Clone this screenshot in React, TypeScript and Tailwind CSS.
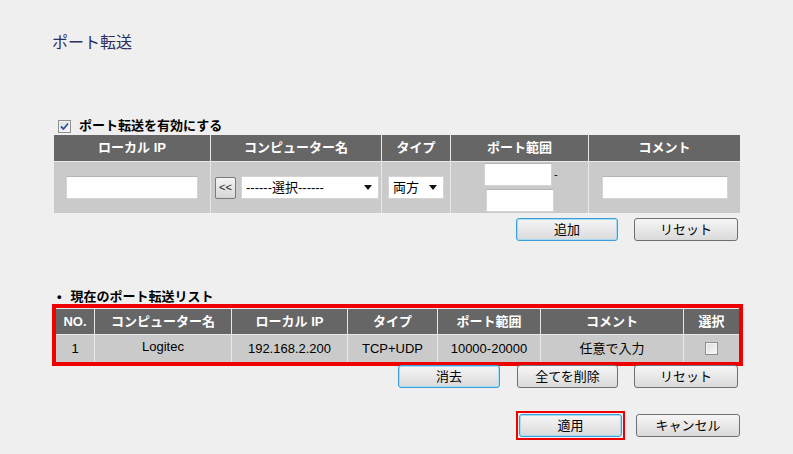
import React from "react";

const font = { fontFamily: '"Liberation Sans", "Noto Sans CJK JP", sans-serif' };

function Btn({ label, w, focus }: { label: string; w: string; focus?: boolean }) {
  return (
    <div
      className={`${w} h-[23px] flex items-center justify-center rounded-[3px] border text-[13px] text-black bg-gradient-to-b from-[#f6f6f6] to-[#dadada] ${
        focus ? "border-[#3c9ed8] shadow-[inset_0_0_0_1px_#a8dcf5]" : "border-[#707070]"
      }`}
    >
      {label}
    </div>
  );
}

function TextInput({ w }: { w: string }) {
  return <div className={`${w} h-[23px] bg-white border border-[#d4d4d4] border-t-[#b4b4b4]`} />;
}

function Arrow() {
  return (
    <svg width="8" height="5" viewBox="0 0 8 5" className="shrink-0">
      <path d="M0 0h8L4 5z" fill="#111" />
    </svg>
  );
}

function Select({ w, label }: { w: string; label: string }) {
  return (
    <div className={`${w} h-[23px] bg-white border border-[#d4d4d4] flex items-center pl-[4px] pr-[6px] text-[13px] text-black`}>
      <span className="flex-1">{label}</span>
      <Arrow />
    </div>
  );
}

function Check({ checked }: { checked?: boolean }) {
  return (
    <div className="w-[13px] h-[13px] border border-[#8e8f8f] bg-gradient-to-br from-[#dcdcdc] to-[#fbfbfb] flex items-center justify-center shadow-[inset_0_0_0_1px_#f4f4f4]">
      {checked && (
        <svg width="9" height="9" viewBox="0 0 9 9">
          <path d="M1 4.5 L3.5 7 L8 1.5" stroke="#2b4fa5" strokeWidth="1.8" fill="none" />
        </svg>
      )}
    </div>
  );
}

export default function App() {
  const h1 = "bg-[#666666] text-white font-bold text-[13px] flex items-center justify-center";
  const d1 = "bg-[#cacaca] flex items-center justify-center";
  return (
    <div className="w-[793px] h-[454px] bg-[#efefef] overflow-hidden" style={font}>
      <div className="pt-[34px] pl-[52px] text-[16px] leading-[18px] text-[#2d2d5f]">ポート転送</div>

      <div className="mt-[66px] pl-[58px] flex items-center gap-[8px] h-[16px]">
        <Check checked />
        <span className="text-[13px] font-bold text-black">ポート転送を有効にする</span>
      </div>

      <div className="ml-[54px] mt-[1px] w-[686px]">
        <div className="grid grid-cols-[156px_170px_68px_137px_151px] grid-rows-[26px_51px] gap-px bg-[#e8e8e8]">
          <div className={h1}>ローカル IP</div>
          <div className={h1}>コンピューター名</div>
          <div className={h1}>タイプ</div>
          <div className={h1}>ポート範囲</div>
          <div className={h1}>コメント</div>

          <div className={d1}>
            <TextInput w="w-[132px]" />
          </div>
          <div className="bg-[#cacaca] flex items-center pl-[4px] gap-[5px]">
            <div className="w-[21px] h-[22px] rounded-[2px] border border-[#7a7a7a] bg-gradient-to-b from-[#f4f4f4] to-[#d6d6d6] flex items-center justify-center text-[11px] text-[#222]">
              &lt;&lt;
            </div>
            <Select w="w-[138px]" label="------選択------" />
          </div>
          <div className={d1}>
            <Select w="w-[56px]" label="両方" />
          </div>
          <div className="bg-[#cacaca] flex flex-col justify-center gap-[3px] pl-[33px]">
            <div className="flex items-center gap-[2px]">
              <TextInput w="w-[68px]" />
              <span className="text-[11px] text-black leading-none">-</span>
            </div>
            <div className="pl-[2px]">
              <TextInput w="w-[68px]" />
            </div>
          </div>
          <div className={d1}>
            <TextInput w="w-[126px]" />
          </div>
        </div>

        <div className="mt-[5px] flex justify-end gap-[16px] pr-[2px]">
          <Btn label="追加" w="w-[102px]" focus />
          <Btn label="リセット" w="w-[104px]" />
        </div>
      </div>

      <div className="mt-[49px] pl-[57px] flex items-center h-[14px] gap-[9px]">
        <span className="text-[13px] font-bold text-black">•</span>
        <span className="text-[13px] font-bold text-black">現在のポート転送リスト</span>
      </div>

      <div className="ml-[52px] w-[691px] border-4 border-[#ee0000]">
        <div className="grid grid-cols-[38px_136px_115px_89px_102px_142px_55px] grid-rows-[25px_27px] gap-px pt-px bg-[#e8e8e8]">
          <div className={h1}>NO.</div>
          <div className={h1}>コンピューター名</div>
          <div className={h1}>ローカル IP</div>
          <div className={h1}>タイプ</div>
          <div className={h1}>ポート範囲</div>
          <div className={h1}>コメント</div>
          <div className={h1}>選択</div>

          <div className={`${d1} text-[13px] text-black`}>1</div>
          <div className={`${d1} text-[13px] text-black pb-[4px]`}>Logitec</div>
          <div className={`${d1} text-[13px] text-black`}>192.168.2.200</div>
          <div className={`${d1} text-[13px] text-black`}>TCP+UDP</div>
          <div className={`${d1} text-[13px] text-black`}>10000-20000</div>
          <div className={`${d1} text-[13px] text-black`}>任意で入力</div>
          <div className={d1}>
            <Check />
          </div>
        </div>
      </div>

      <div className="ml-[398px] -mt-px flex gap-[17px]">
        <Btn label="消去" w="w-[102px]" focus />
        <div className="flex gap-[16px]">
          <Btn label="全てを削除" w="w-[101px]" />
          <Btn label="リセット" w="w-[104px]" />
        </div>
      </div>

      <div className="mt-[23px] ml-[516px] flex items-center gap-[11px]">
        <div className="border-2 border-[#ee0000] p-px">
          <Btn label="適用" w="w-[103px]" focus />
        </div>
        <Btn label="キャンセル" w="w-[104px]" />
      </div>
    </div>
  );
}
